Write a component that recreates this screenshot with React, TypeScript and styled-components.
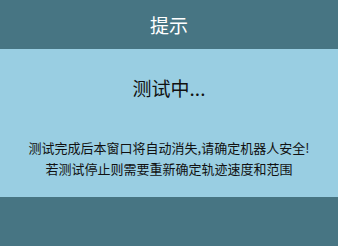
import React from "react"
import styled, { createGlobalStyle } from "styled-components"

const GlobalStyle = createGlobalStyle`
  html, body {
    margin: 0;
    padding: 0;
  }
  body {
    font-family: "Noto Sans CJK SC", "Noto Sans", sans-serif;
  }
`

const Dialog = styled.div`
  width: 338px;
  height: 246px;
  display: flex;
  flex-direction: column;
  background-color: #477583;
`

const Header = styled.div`
  height: 49px;
  display: flex;
  align-items: center;
  justify-content: center;
  color: #ffffff;
  font-size: 19px;
`

const Body = styled.div`
  height: 148px;
  background-color: #99cee2;
  display: flex;
  flex-direction: column;
  align-items: center;
  color: #111111;
`

const Status = styled.div`
  margin-top: 26px;
  font-size: 19px;
  line-height: 26px;
`

const Notice = styled.div`
  margin-top: 36px;
  font-size: 13px;
  line-height: 21px;
  text-align: center;
`

export default function App() {
  return (
    <>
      <GlobalStyle />
      <Dialog>
        <Header>提示</Header>
        <Body>
          <Status>测试中...</Status>
          <Notice>
            测试完成后本窗口将自动消失,请确定机器人安全!
            <br />
            若测试停止则需要重新确定轨迹速度和范围
          </Notice>
        </Body>
      </Dialog>
    </>
  )
}
